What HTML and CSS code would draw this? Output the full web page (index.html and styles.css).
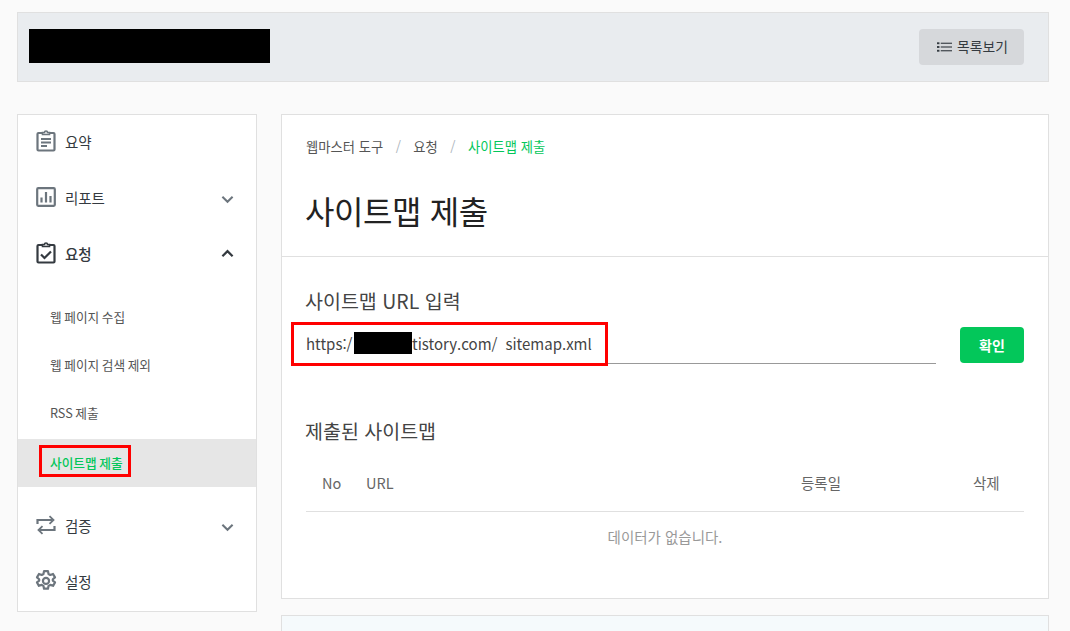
FILE: index.html
```html
<!DOCTYPE html>
<html lang="ko">
<head>
<meta charset="utf-8">
<title>사이트맵 제출</title>
<link rel="stylesheet" href="styles.css">
</head>
<body>
<div class="page">
  <header class="site-head">
    <div class="redact-name"></div>
    <button class="list-btn">
      <svg class="list-ico" viewBox="0 0 16 12" width="15" height="12"><g fill="#343a40"><rect x="0" y="1" width="2.6" height="2"/><rect x="0" y="5" width="2.6" height="2"/><rect x="0" y="9" width="2.6" height="2"/><rect x="4" y="1.4" width="12" height="1.2"/><rect x="4" y="5.4" width="12" height="1.2"/><rect x="4" y="9.4" width="12" height="1.2"/></g></svg>
      <span>목록보기</span>
    </button>
  </header>
  <div class="columns">
    <nav class="side">
      <div class="nav-item">
        <svg class="nav-ico" viewBox="0 0 20 22" width="20" height="22" fill="none" stroke="#6c757d" stroke-width="2.2"><path d="M6.5 3H2.5a1 1 0 0 0-1 1v15.5a1 1 0 0 0 1 1h15a1 1 0 0 0 1-1V4a1 1 0 0 0-1-1h-4"/><path d="M6.5 4.5V2.5h2a1.5 1.5 0 0 1 3 0h2v2z" stroke-width="1.6"/><path d="M5 9h10M5 12.5h10M5 16h6" stroke-width="1.9"/></svg>
        <span>요약</span>
      </div>
      <div class="nav-item">
        <svg class="nav-ico" viewBox="0 0 20 20" width="20" height="20" fill="none" stroke="#6c757d"><rect x="1.2" y="1.2" width="17.6" height="17.6" rx="1" stroke-width="2.2"/><path d="M5.5 15.5v-5M10 15.5V5M14.5 15.5V9" stroke-width="2.2"/></svg>
        <span>리포트</span>
        <svg class="chev" viewBox="0 0 14 9" width="13" height="9" fill="none" stroke="#6c757d" stroke-width="2.2"><path d="M1.5 1.5 7 7l5.5-5.5"/></svg>
      </div>
      <div class="nav-item is-open">
        <svg class="nav-ico" viewBox="0 0 20 22" width="20" height="22" fill="none" stroke="#343a40" stroke-width="2.2"><path d="M6.5 3H2.5a1 1 0 0 0-1 1v15.5a1 1 0 0 0 1 1h15a1 1 0 0 0 1-1V4a1 1 0 0 0-1-1h-4"/><path d="M6.5 4.5V2.5h2a1.5 1.5 0 0 1 3 0h2v2z" stroke-width="1.6"/><path d="M5 12.5l3.5 3.5L15 9.5"/></svg>
        <span>요청</span>
        <svg class="chev" viewBox="0 0 14 9" width="13" height="9" fill="none" stroke="#343a40" stroke-width="2.4"><path d="M1.5 7.5 7 2l5.5 5.5"/></svg>
      </div>
      <ul class="sub">
        <li>웹 페이지 수집</li>
        <li>웹 페이지 검색 제외</li>
        <li>RSS 제출</li>
        <li class="sub-on"><span>사이트맵 제출</span><i class="mark mark-side"></i></li>
      </ul>
      <div class="nav-item">
        <svg class="nav-ico" viewBox="0 0 20 20" width="20" height="20" fill="none" stroke="#6c757d" stroke-width="2.2"><path d="M1.5 9V5h15"/><path d="M13.5 1.2 17.5 5l-4 3.8" stroke-width="1.8"/><path d="M18.5 11v4h-15"/><path d="M6.5 11.2 2.5 15l4 3.8" stroke-width="1.8"/></svg>
        <span>검증</span>
        <svg class="chev" viewBox="0 0 14 9" width="13" height="9" fill="none" stroke="#6c757d" stroke-width="2.2"><path d="M1.5 1.5 7 7l5.5-5.5"/></svg>
      </div>
      <div class="nav-item">
        <svg class="nav-ico nav-ico-gear" viewBox="0 0 20 20" width="22" height="22" fill="none" stroke="#6c757d" stroke-width="2"><path d="M8.2 1h3.6l.5 2.6 1.6.9 2.5-.9 1.8 3.1-2 1.7v1.2l2 1.7-1.8 3.1-2.5-.9-1.6.9-.5 2.6H8.2l-.5-2.6-1.6-.9-2.5.9-1.8-3.1 2-1.7V8.4l-2-1.7 1.8-3.1 2.5.9 1.6-.9z" stroke-linejoin="round"/><circle cx="10" cy="9.9" r="2.8"/></svg>
        <span>설정</span>
      </div>
    </nav>
    <div class="content">
      <main class="card">
        <section class="card-top">
          <ol class="crumbs">
            <li>웹마스터 도구</li>
            <li class="sep">/</li>
            <li>요청</li>
            <li class="sep">/</li>
            <li class="crumb-on">사이트맵 제출</li>
          </ol>
          <h1>사이트맵 제출</h1>
        </section>
        <section class="card-body">
          <h2 class="h-url">사이트맵 URL 입력</h2>
          <div class="url-row">
            <div class="url-field">
              <span class="u1">https:/</span><i class="redact-url"></i><span class="u2">tistory.com/</span><span class="u3">sitemap.xml</span>
              <i class="mark mark-url"></i>
            </div>
            <button class="ok">확인</button>
          </div>
          <h2 class="h-list">제출된 사이트맵</h2>
          <div class="thead">
            <span class="c-no">No</span>
            <span class="c-url">URL</span>
            <span class="c-date">등록일</span>
            <span class="c-del">삭제</span>
          </div>
          <p class="empty">데이터가 없습니다.</p>
        </section>
      </main>
      <div class="next-card"></div>
    </div>
  </div>
</div>
</body>
</html>
```

FILE: styles.css
```css
* { box-sizing: border-box; }
html, body { margin: 0; height: 631px; overflow: hidden; }
body {
  background: #fafafa;
  font-family: "Noto Sans CJK KR", "Noto Sans", sans-serif;
  color: #333;
}
.page { padding: 12px 21px 0 17px; }
.site-head {
  height: 70px;
  background: #e9ecef;
  border: 1px solid #e0e0e0;
  display: flex;
  align-items: flex-start;
  justify-content: space-between;
  padding: 16px 24px 0 11px;
}
.redact-name { width: 241px; height: 34px; background: #000; }
.list-btn {
  width: 105px;
  height: 36px;
  background: #d6d8db;
  border: 0;
  border-radius: 4px;
  display: flex;
  align-items: center;
  justify-content: center;
  gap: 5px;
  font: 13.8px/1 "Noto Sans CJK KR", sans-serif;
  color: #343a40;
  padding: 0 0 0 2px;
}
.columns { display: flex; gap: 24px; margin-top: 32px; align-items: flex-start; }
.side {
  width: 240px;
  height: 498px;
  flex: none;
  background: #fff;
  border: 1px solid #e0e0e0;
}
.nav-item {
  height: 56px;
  display: flex;
  align-items: center;
  padding: 0 22px 2px 18px;
  font-size: 14.5px;
  letter-spacing: -0.1px;
  color: #343a40;
  position: relative;
}
.side > .nav-item:nth-child(-n+3) { padding-bottom: 4px; }
.nav-ico { flex: none; margin-right: 9px; width: 20px; }
.nav-ico-gear { width: 22px; margin: 0 8px 0 -1px; }
.nav-item.is-open { font-weight: 500; }
.chev { margin: 4px 0 0 auto; }
.is-open .chev { margin-top: 0; }
.sub { list-style: none; margin: 0; padding: 12px 0 11px; }
.sub li {
  height: 48px;
  display: flex;
  align-items: center;
  padding: 0 0 6px 32px;
  font-size: 12.7px;
  word-spacing: -1px;
  color: #555;
  position: relative;
}
.sub li.sub-on {
  background: #e6e6e6;
  color: #03c75a;
  font-weight: 500;
  padding-bottom: 2px;
}
.mark { position: absolute; border: 3px solid #f00; display: block; pointer-events: none; }
.mark-side { left: 21px; top: 6px; width: 92px; height: 32px; }
.content { flex: 1; min-width: 0; display: flex; flex-direction: column; gap: 16px; }
.card { height: 485px; background: #fff; border: 1px solid #e0e0e0; }
.card-top { height: 142px; border-bottom: 1px solid #e0e0e0; padding: 23px 24px 0; }
.crumbs {
  list-style: none;
  display: flex;
  margin: 0;
  padding: 0;
  font-size: 13.3px;
  line-height: 17px;
  color: #555;
}
.sep { color: #adb5bd; margin: 0 12.5px; }
.crumb-on { color: #03c75a; }
h1 {
  margin: 31px 0 0 -1px;
  font-size: 32px;
  letter-spacing: -0.4px;
  line-height: 48px;
  font-weight: 400;
  color: #222;
}
.card-body { padding: 0 24px; }
h2 { margin: 0 0 0 -1px; font-weight: 400; font-size: 19.5px; line-height: 28px; color: #444; }
.h-url { padding-top: 30px; }
.url-row { display: flex; align-items: flex-start; justify-content: space-between; height: 49px; }
.url-field {
  width: 630px;
  height: 49px;
  border-bottom: 1px solid #999;
  position: relative;
  display: flex;
  align-items: center;
  font-size: 15px;
  color: #444;
  padding-top: 8px;
}
.redact-url { width: 58px; height: 22px; margin-left: 1.5px; background: #000; display: block; }
.u3 { margin-left: 8px; }
.mark-url { left: -15px; top: 7px; width: 317px; height: 44px; }
.ok {
  width: 64px;
  height: 36px;
  margin-top: 12px;
  background: #03c75a;
  border: 0;
  border-radius: 4px;
  color: #fff;
  font: 700 14px/1 "Noto Sans CJK KR", sans-serif;
  padding: 0;
}
.h-list { margin-top: 53px; }
.thead {
  height: 67px;
  border-bottom: 1px solid #e0e0e0;
  display: flex;
  align-items: center;
  font-size: 14.5px;
  color: #666;
  padding-top: 9px;
}
.c-no { width: 60px; padding-left: 16px; }
.c-url { width: 435px; }
.c-date { width: 172px; }
.empty { margin: 0; padding-top: 15px; text-align: center; font-size: 14.5px; line-height: 20px; color: #999; }
.next-card { height: 40px; background: #f5fafc; border: 1px solid #e0e0e0; }
```
